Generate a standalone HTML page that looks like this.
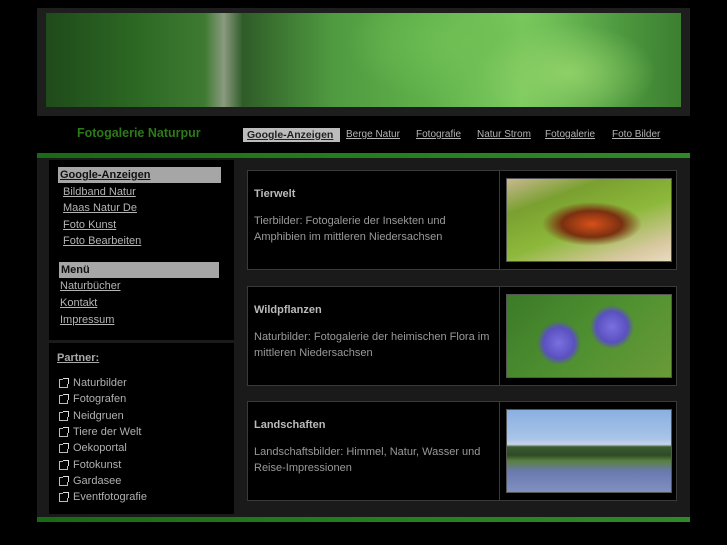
<!DOCTYPE html>
<html><head><meta charset="utf-8"><style>
*{margin:0;padding:0;box-sizing:border-box}
body{width:727px;height:545px;background:#000;font-family:"Liberation Sans",sans-serif;position:relative;overflow:hidden;color:#aaa}
.abs{position:absolute}
a{color:#b4b4b4;text-decoration:underline}
#hdr{left:37px;top:8px;width:653px;height:108px;background:#1e1e1e}
#img{left:46px;top:13px;width:635px;height:94px;background:
radial-gradient(ellipse 90px 50px at 520px 60px,#8fd068 0%,rgba(100,180,70,0) 100%),
radial-gradient(ellipse 120px 60px at 420px 30px,#6fbf55 0%,rgba(80,160,60,0) 100%),
linear-gradient(90deg,#1f4a1a 0%,#2d6a24 15%,#3f7a32 25%,#8a9a80 28%,#2f5c28 31%,#4f9a40 45%,#5fb04a 60%,#7ccc60 75%,#4f9a40 90%,#3c7f30 100%)}
#title{left:77px;top:126px;color:#2c7a18;font-weight:bold;font-size:12.5px}
.nv{top:129px;font-size:10px}
.navhl{left:243px;top:128px;width:97px;height:14px;background:#bcbcbc;color:#222;font-weight:bold;font-size:10.5px;padding-left:4px;line-height:14px;text-decoration:underline}
.g{left:37px;width:653px;height:5px;background:linear-gradient(90deg,#186a14,#237f1c 50%,#2f8a26)}
#main{left:37px;top:158px;width:653px;height:359px;background:#1a1a1a}
#side{left:49px;top:160px;width:185px;height:180px;background:#000}
#part{left:49px;top:343px;width:185px;height:171px;background:#000}
.hl{background:#a6a6a6;color:#111;font-weight:bold;font-size:11px;height:16px;line-height:16px;padding-left:2px}
.lk{font-size:11px;position:absolute}
.box{left:247px;width:430px;height:100px;background:#000;border:1px solid #3a3a3a}
.box .d{position:absolute;left:251px;top:0;width:1px;height:100%;background:#3a3a3a}
.box h3{position:absolute;left:6px;top:17px;font-size:11px;color:#bbb}
.box p{position:absolute;left:6px;top:42px;width:245px;font-size:11px;line-height:16px;color:#9a9a9a}
.box .im{position:absolute;left:258px;top:7px;width:166px;height:84px;border:1px solid #555}
.pl{font-size:11px;color:#b0b0b0;position:absolute;left:73px}
.ic{position:absolute;left:59px;width:9px;height:9px;border:1px solid #bbb}
.ic:after{content:"";position:absolute;left:3px;top:-2px;width:5px;height:5px;border-top:1.5px solid #ddd;border-right:1.5px solid #ddd;background:#000}
</style></head><body>
<div id="hdr" class="abs"></div>
<div id="img" class="abs"></div>
<div id="title" class="abs">Fotogalerie Naturpur</div>
<div class="abs navhl">Google-Anzeigen</div>
<a class="abs nv" style="left:346px">Berge Natur</a>
<a class="abs nv" style="left:416px">Fotografie</a>
<a class="abs nv" style="left:477px">Natur Strom</a>
<a class="abs nv" style="left:545px">Fotogalerie</a>
<a class="abs nv" style="left:612px">Foto Bilder</a>
<div class="abs g" style="top:153px"></div>
<div id="main" class="abs"></div>
<div id="side" class="abs">
<div class="hl" style="position:absolute;left:9px;top:7px;width:163px;text-decoration:underline">Google-Anzeigen</div>
<a class="lk" style="left:14px;top:26px">Bildband Natur</a>
<a class="lk" style="left:14px;top:42px">Maas Natur De</a>
<a class="lk" style="left:14px;top:59px">Foto Kunst</a>
<a class="lk" style="left:14px;top:75px">Foto Bearbeiten</a>
<div class="hl" style="position:absolute;left:10px;top:102px;width:160px">Menü</div>
<a class="lk" style="left:11px;top:120px">Naturbücher</a>
<a class="lk" style="left:11px;top:137px">Kontakt</a>
<a class="lk" style="left:11px;top:154px">Impressum</a>
</div>
<div id="part" class="abs">
<a class="lk" style="left:8px;top:9px;font-weight:bold;color:#aaa">Partner:</a>
</div>
<div class="ic" style="top:379px"></div><div class="pl" style="top:377px">Naturbilder</div>
<div class="ic" style="top:395px"></div><div class="pl" style="top:393px">Fotografen</div>
<div class="ic" style="top:412px"></div><div class="pl" style="top:410px">Neidgruen</div>
<div class="ic" style="top:428px"></div><div class="pl" style="top:426px">Tiere der Welt</div>
<div class="ic" style="top:444px"></div><div class="pl" style="top:442px">Oekoportal</div>
<div class="ic" style="top:461px"></div><div class="pl" style="top:459px">Fotokunst</div>
<div class="ic" style="top:477px"></div><div class="pl" style="top:475px">Gardasee</div>
<div class="ic" style="top:493px"></div><div class="pl" style="top:491px">Eventfotografie</div>

<div class="abs box" style="top:170px"><div class="d"></div><h3>Tierwelt</h3><p>Tierbilder: Fotogalerie der Insekten und Amphibien im mittleren Niedersachsen</p>
<div class="im" style="background:radial-gradient(ellipse 50px 22px at 85px 45px,#d8501a 0%,#7a3010 60%,rgba(0,0,0,0) 100%),linear-gradient(160deg,#c8b890 0%,#7aa030 25%,#8cb83a 55%,#d8c8a0 85%,#e8dcc0 100%)"></div></div>
<div class="abs box" style="top:286px"><div class="d"></div><h3>Wildpflanzen</h3><p>Naturbilder: Fotogalerie der heimischen Flora im mittleren Niedersachsen</p>
<div class="im" style="background:radial-gradient(circle 22px at 52px 48px,#7a70e0 0%,#5a50c0 70%,rgba(0,0,0,0) 100%),radial-gradient(circle 22px at 105px 32px,#7a70e0 0%,#5a50c0 70%,rgba(0,0,0,0) 100%),linear-gradient(135deg,#3c7a28,#4e9030 50%,#6a9a38)"></div></div>
<div class="abs box" style="top:401px"><div class="d"></div><h3>Landschaften</h3><p>Landschaftsbilder: Himmel, Natur, Wasser und Reise-Impressionen</p>
<div class="im" style="background:linear-gradient(180deg,#8ab0e0 0%,#a8c4e8 35%,#c8d4e8 42%,#3a5a30 45%,#2e4a28 55%,#5a8040 62%,#6a7ab0 75%,#8090c0 100%)"></div></div>
<div class="abs g" style="top:517px"></div>
</body></html>
